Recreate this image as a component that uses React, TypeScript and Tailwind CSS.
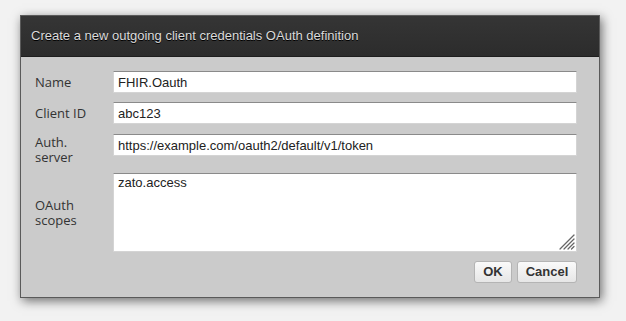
import React from "react";

const inputCls =
  "block w-full h-[22px] bg-white border border-[#d4d4d4] border-t-[#8a8a8a] px-[4px] text-[13px] text-[#222] outline-none font-['Liberation_Sans',Arial,sans-serif]";

function Row({
  label,
  children,
  align = "items-center",
  className = "",
}: {
  label: React.ReactNode;
  children: React.ReactNode;
  align?: string;
  className?: string;
}) {
  return (
    <div className={`flex ${align} ${className}`}>
      <div className="w-[78px] shrink-0 text-[13px] leading-[15px] text-[#333] font-['Open_Sans','Noto_Sans',sans-serif]">
        {label}
      </div>
      <div className="flex-1">{children}</div>
    </div>
  );
}

export default function App() {
  return (
    <div className="w-[626px] h-[321px] bg-[#f2f2f2] pt-[15px] pl-[20px]">
      <div className="w-[580px] h-[283px] flex flex-col border border-[#5a5a5a] bg-[#cbcbcb] shadow-[2px_3px_10px_rgba(0,0,0,0.55)]">
        <div className="h-[41px] shrink-0 flex items-center pl-[10px] bg-gradient-to-b from-[#353535] to-[#2c2c2c] border-b border-[#1e1e1e]">
          <span className="text-[13px] text-[#dcdcdc] [text-shadow:0_1px_0_#000] font-['Liberation_Sans',Arial,sans-serif]">
            Create a new outgoing client credentials OAuth definition
          </span>
        </div>
        <div className="flex-1 flex flex-col pt-[14px] pl-[14px] pr-[22px]">
          <Row label="Name">
            <input className={inputCls} defaultValue="FHIR.Oauth" />
          </Row>
          <Row label="Client ID" className="mt-[9px]">
            <input className={inputCls} defaultValue="abc123" />
          </Row>
          <Row
            label={
              <div className="pt-[1px]">
                Auth.
                <br />
                server
              </div>
            }
            align="items-start"
            className="mt-[10px]"
          >
            <input
              className={inputCls}
              defaultValue="https://example.com/oauth2/default/v1/token"
            />
          </Row>
          <Row
            label={
              <div>
                OAuth
                <br />
                scopes
              </div>
            }
            className="mt-[8px]"
          >
            <div className="relative">
              <textarea
                className="block w-full h-[79px] bg-white border border-[#d4d4d4] border-t-[#8a8a8a] px-[4px] py-[1px] text-[13px] leading-[15px] text-[#222] outline-none resize-none font-['Liberation_Sans',Arial,sans-serif]"
                defaultValue="zato.access"
              />
              {/* resize grip */}
              <svg
                className="absolute right-[2px] bottom-[2px] pointer-events-none"
                width="16"
                height="16"
                viewBox="0 0 16 16"
              >
                <g stroke="#666" strokeWidth="1.2" strokeLinecap="round">
                  <line x1="15" y1="1" x2="1" y2="15" />
                  <line x1="15" y1="5" x2="5" y2="15" />
                  <line x1="15" y1="9" x2="9" y2="15" />
                  <line x1="15" y1="12.5" x2="12.5" y2="15" />
                </g>
              </svg>
            </div>
          </Row>
          <div className="flex justify-end gap-[5px] mt-[9px]">
            <button className="h-[22px] w-[38px] rounded-[3px] border border-[#b4b4b4] bg-gradient-to-b from-[#fafafa] to-[#e6e6e6] text-[13px] font-bold text-[#333] font-['Liberation_Sans',Arial,sans-serif]">
              OK
            </button>
            <button className="h-[22px] w-[60px] rounded-[3px] border border-[#b4b4b4] bg-gradient-to-b from-[#fafafa] to-[#e6e6e6] text-[13px] font-bold text-[#333] font-['Liberation_Sans',Arial,sans-serif]">
              Cancel
            </button>
          </div>
        </div>
      </div>
    </div>
  );
}
